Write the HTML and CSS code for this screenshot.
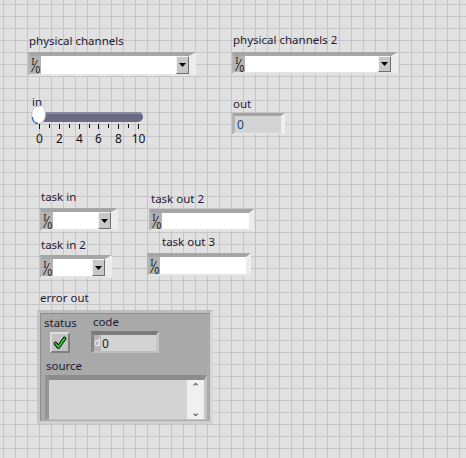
FILE: index.html
```html
<!DOCTYPE html>
<html>
<head>
<meta charset="utf-8">
<link rel="stylesheet" href="styles.css">
</head>
<body>
<div class="panel">

  <div class="obj pc1">
    <span class="lbl">physical channels</span>
    <div class="io combo">
      <span class="ioicon"><svg width="11" height="16" viewBox="0 0 11 16"><text x="1.2" y="7.5" class="ioi">I</text><line x1="1.5" y1="15" x2="7.5" y2="3" stroke="#222" stroke-width="0.9"/><text x="5.2" y="15.5" class="ioo">0</text></svg></span>
      <span class="field"></span>
      <span class="drop"><svg width="7" height="4" viewBox="0 0 7 4"><path d="M0 0H7L3.5 4Z" fill="#000"/></svg></span>
    </div>
  </div>

  <div class="obj pc2">
    <span class="lbl">physical channels 2</span>
    <div class="io combo">
      <span class="ioicon"><svg width="11" height="16" viewBox="0 0 11 16"><text x="1.2" y="7.5" class="ioi">I</text><line x1="1.5" y1="15" x2="7.5" y2="3" stroke="#222" stroke-width="0.9"/><text x="5.2" y="15.5" class="ioo">0</text></svg></span>
      <span class="field"></span>
      <span class="drop"><svg width="7" height="4" viewBox="0 0 7 4"><path d="M0 0H7L3.5 4Z" fill="#000"/></svg></span>
    </div>
  </div>

  <div class="obj slider">
    <span class="lbl">in</span>
    <svg class="slide" width="125" height="44" viewBox="0 0 125 44">
      <rect x="10" y="8" width="105" height="10" rx="5" fill="#6a6a84"/>
      <rect x="10" y="8" width="103" height="2" fill="#8a8aa0"/>
      <path d="M10 2.5 C14.5 0 17.5 4 17.5 10 C17.5 16 14.5 19.5 10 19.5 C6 19.5 3.8 16 3.8 11 C3.8 6 6 2.5 10 2.5Z" fill="#ffffff" stroke="#b8b8c4" stroke-width="0.8"/>
      <path d="M4.3 13 C4.8 17.5 7 19.5 10 19.5" fill="none" stroke="#2a6ad8" stroke-width="1.4"/>
      <g stroke="#111" stroke-width="1">
        <line x1="11.5" y1="20" x2="11.5" y2="25"/>
        <line x1="21.5" y1="20" x2="21.5" y2="24"/>
        <line x1="31.5" y1="20" x2="31.5" y2="25"/>
        <line x1="41.5" y1="20" x2="41.5" y2="24"/>
        <line x1="51.5" y1="20" x2="51.5" y2="25"/>
        <line x1="61.5" y1="20" x2="61.5" y2="24"/>
        <line x1="70.5" y1="20" x2="70.5" y2="25"/>
        <line x1="80.5" y1="20" x2="80.5" y2="24"/>
        <line x1="90.5" y1="20" x2="90.5" y2="25"/>
        <line x1="100.5" y1="20" x2="100.5" y2="24"/>
        <line x1="110.5" y1="20" x2="110.5" y2="25"/>
      </g>
      <g class="scl">
        <text x="11.5" y="39" text-anchor="middle">0</text>
        <text x="31.5" y="39" text-anchor="middle">2</text>
        <text x="51.5" y="39" text-anchor="middle">4</text>
        <text x="70.5" y="39" text-anchor="middle">6</text>
        <text x="90.5" y="39" text-anchor="middle">8</text>
        <text x="110.5" y="39" text-anchor="middle">10</text>
      </g>
    </svg>
  </div>

  <div class="obj out">
    <span class="lbl">out</span>
    <div class="num outnum"><span class="val">0</span></div>
  </div>

  <div class="obj tin">
    <span class="lbl">task in</span>
    <div class="io combo">
      <span class="ioicon"><svg width="11" height="16" viewBox="0 0 11 16"><text x="1.2" y="7.5" class="ioi">I</text><line x1="1.5" y1="15" x2="7.5" y2="3" stroke="#222" stroke-width="0.9"/><text x="5.2" y="15.5" class="ioo">0</text></svg></span>
      <span class="field"></span>
      <span class="drop"><svg width="7" height="4" viewBox="0 0 7 4"><path d="M0 0H7L3.5 4Z" fill="#000"/></svg></span>
    </div>
  </div>

  <div class="obj tin2">
    <span class="lbl">task in 2</span>
    <div class="io combo">
      <span class="ioicon"><svg width="11" height="16" viewBox="0 0 11 16"><text x="1.2" y="7.5" class="ioi">I</text><line x1="1.5" y1="15" x2="7.5" y2="3" stroke="#222" stroke-width="0.9"/><text x="5.2" y="15.5" class="ioo">0</text></svg></span>
      <span class="field"></span>
      <span class="drop"><svg width="7" height="4" viewBox="0 0 7 4"><path d="M0 0H7L3.5 4Z" fill="#000"/></svg></span>
    </div>
  </div>

  <div class="obj tout2">
    <span class="lbl">task out 2</span>
    <div class="io ind">
      <span class="ioicon"><svg width="11" height="16" viewBox="0 0 11 16"><text x="1.2" y="7.5" class="ioi">I</text><line x1="1.5" y1="15" x2="7.5" y2="3" stroke="#222" stroke-width="0.9"/><text x="5.2" y="15.5" class="ioo">0</text></svg></span>
      <span class="field"></span>
    </div>
  </div>

  <div class="obj tout3">
    <span class="lbl">task out 3</span>
    <div class="io ind">
      <span class="ioicon"><svg width="11" height="16" viewBox="0 0 11 16"><text x="1.2" y="7.5" class="ioi">I</text><line x1="1.5" y1="15" x2="7.5" y2="3" stroke="#222" stroke-width="0.9"/><text x="5.2" y="15.5" class="ioo">0</text></svg></span>
      <span class="field"></span>
    </div>
  </div>

  <div class="obj err">
    <span class="lbl">error out</span>
    <div class="cluster">
      <div class="crow">
        <div class="cgrp status">
          <span class="lbl">status</span>
          <span class="led"><svg width="14" height="14" viewBox="0 0 14 14"><path d="M2.5 7.5 L5.5 11 L11.5 2.5" fill="none" stroke="#000" stroke-width="3.6" stroke-linecap="round" stroke-linejoin="round"/><path d="M2.5 7.5 L5.5 11 L11.5 2.5" fill="none" stroke="#22e022" stroke-width="1.8" stroke-linecap="round" stroke-linejoin="round"/></svg></span>
        </div>
        <div class="cgrp code">
          <span class="lbl">code</span>
          <div class="num codenum"><span class="radix">d</span><span class="val">0</span></div>
        </div>
      </div>
      <div class="cgrp source">
        <span class="lbl">source</span>
        <div class="strbox">
          <span class="strfield"></span>
          <span class="scroll"><span class="up">&#x2303;</span><span class="dn">&#x2304;</span></span>
        </div>
      </div>
    </div>
  </div>

</div>
</body>
</html>
```
FILE: styles.css
```css
html, body {
  margin: 0;
  padding: 0;
}
body {
  width: 466px;
  height: 458px;
  overflow: hidden;
}
.panel {
  position: relative;
  width: 466px;
  height: 458px;
  background-color: #e1e1e1;
  background-image:
    linear-gradient(to right, #c5c5c5 1px, transparent 1px),
    linear-gradient(to bottom, #c5c5c5 1px, transparent 1px);
  background-size: 12px 12px;
  background-position: 3px 4px;
  font-family: "Noto Sans", "DejaVu Sans", sans-serif;
  font-size: 11.5px;
  color: #1e1a36;
}
.obj {
  position: absolute;
  display: flex;
  flex-direction: column;
  align-items: flex-start;
}
.lbl {
  display: block;
  line-height: 14px;
  white-space: nowrap;
  margin-left: 1px;
}

/* I/O controls */
.io {
  display: flex;
  box-sizing: border-box;
  background: #cacaca;
  border-style: solid;
  border-width: 4px 7px 2px 2px;
  border-color: #a6a6a6 #ececec #e4e4e4 #b6b6b6;
}
.ioicon {
  width: 11px;
  flex: none;
  background: #b3b3b3;
  display: flex;
  align-items: center;
}
.ioicon svg { display: block; }
.ioi {
  font-family: "DejaVu Serif", serif;
  font-size: 8.5px;
  fill: #111;
}
.ioo {
  font-family: "DejaVu Sans", sans-serif;
  font-size: 8px;
  fill: #111;
}
.field {
  flex: 1;
  background: #ffffff;
}
.drop {
  width: 13px;
  flex: none;
  box-sizing: border-box;
  background: #c8c8c8;
  border-style: solid;
  border-width: 1px;
  border-color: #f2f2f2 #6e6e6e #6e6e6e #f2f2f2;
  display: flex;
  align-items: center;
  justify-content: center;
}
.drop svg { display: block; }

.pc1 { left: 28px; top: 34px; }
.pc1 .combo { margin-top: 4px; width: 168px; height: 24px; }
.pc2 { left: 232px; top: 33px; }
.pc2 .combo { margin-top: 5px; width: 166px; height: 22px; }
.tin { left: 40px; top: 190px; }
.tin .combo { margin-top: 4px; width: 78px; height: 23px; }
.tin2 { left: 40px; top: 238px; }
.tin2 .combo { margin-top: 3px; width: 72px; height: 23px; }
.tout2 { left: 149px; top: 192px; }
.tout2 .lbl { margin-left: 2px; }
.tout2 .ind { margin-top: 3px; width: 105px; height: 22px; }
.tout3 { left: 147px; top: 235px; }
.tout3 .lbl { margin-left: 15px; }
.tout3 .ind { margin-top: 4px; width: 104px; height: 23px; }
.ind { border-right-width: 5px; }

/* slider */
.slider { left: 28px; top: 95px; }
.slider .lbl { margin-left: 4px; }
.slide { display: block; margin-top: -5px; }
.scl text {
  font-family: "Noto Sans", "DejaVu Sans", sans-serif;
  font-size: 12px;
  fill: #111;
}

/* numerics */
.num {
  display: flex;
  align-items: center;
  box-sizing: border-box;
  background: #d4d4d4;
  border-style: solid;
}
.out { left: 232px; top: 97px; }
.outnum {
  margin-top: 2px;
  width: 53px;
  height: 21px;
  border-width: 3px 4px 1px 3px;
  border-color: #a4a4a4 #f0f0f0 #e6e6e6 #b4b4b4;
}
.outnum .val {
  margin-left: 2px;
  font-size: 12px;
  color: #1d3f7a;
}

/* cluster */
.err { left: 37px; top: 291px; }
.err > .lbl { margin-left: 3px; }
.cluster {
  margin-top: 5px;
  width: 176px;
  height: 114px;
  box-sizing: border-box;
  background: #a9a9a9;
  border-style: solid;
  border-width: 3px;
  border-color: #bebebe #d6d6d6 #d0d0d0 #c6c6c6;
  box-shadow: inset 1px 1px 0 #8f8f8f;
  padding-top: 2px;
  display: flex;
  flex-direction: column;
}
.crow {
  display: flex;
  align-items: flex-start;
}
.cgrp {
  display: flex;
  flex-direction: column;
  align-items: flex-start;
}
.status { margin-left: 4px; margin-top: 1px; }
.status .lbl { margin-left: 0; }
.led {
  margin-left: 6px;
  margin-top: 2px;
  width: 20px;
  height: 21px;
  box-sizing: border-box;
  background: #c2c2c2;
  border-style: solid;
  border-width: 2px;
  border-color: #dcdcdc #7e7e7e #7e7e7e #dcdcdc;
  display: flex;
  align-items: center;
  justify-content: center;
}
.led svg { display: block; }
.code { margin-left: 14px; }
.code .lbl { margin-left: 2px; }
.codenum {
  margin-top: 2px;
  width: 68px;
  height: 22px;
  border-width: 4px 3px 2px 3px;
  border-color: #7c7c7c #c6c6c6 #bebebe #868686;
  background: #d3d3d3;
}
.radix {
  align-self: stretch;
  width: 7px;
  background: #b4b4b4;
  color: #f4f4f4;
  font-family: "DejaVu Sans", sans-serif;
  font-size: 10px;
  line-height: 16px;
  text-align: center;
}
.codenum .val {
  margin-left: 1px;
  font-size: 12px;
  color: #1b1b33;
}
.source { margin-left: 5px; margin-top: 6px; }
.source .lbl { margin-left: 1px; }
.strbox {
  margin-top: 2px;
  width: 162px;
  height: 45px;
  box-sizing: border-box;
  display: flex;
  background: #d3d3d3;
  border-style: solid;
  border-width: 5px 3px 1px 4px;
  border-color: #8c8c8c #c4c4c4 #c4c4c4 #959595;
}
.strfield { flex: 1; }
.scroll {
  width: 17px;
  flex: none;
  background: #f0f0f0;
  display: flex;
  flex-direction: column;
  justify-content: space-between;
  align-items: center;
  color: #444;
  font-family: "DejaVu Sans", sans-serif;
  font-size: 11px;
  line-height: 12px;
  overflow: hidden;
}
.up { margin-top: 2px; }
.dn { margin-bottom: 0; }
```
